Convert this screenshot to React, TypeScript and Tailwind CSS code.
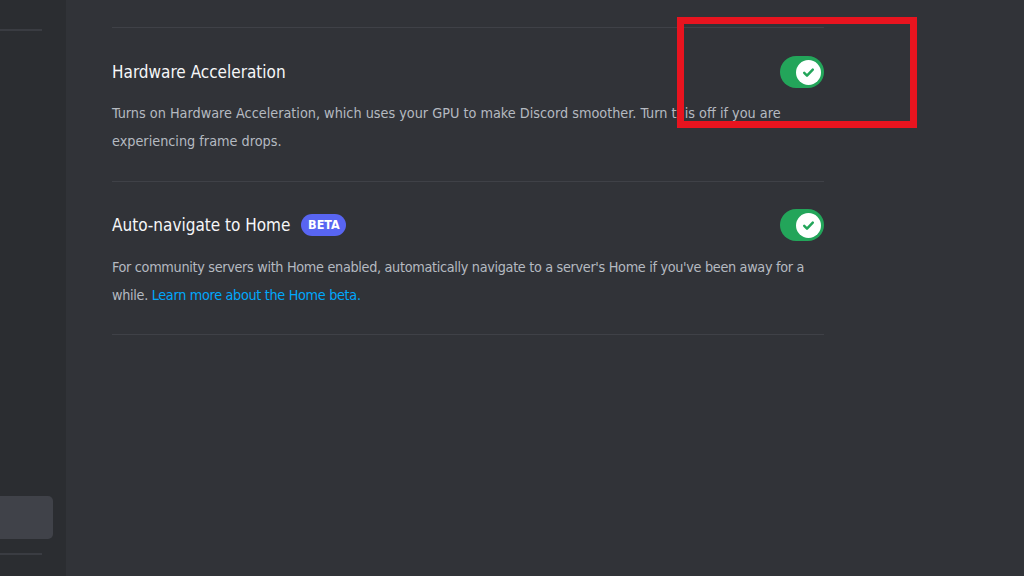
import React from "react";

const font = { fontFamily: '"DejaVu Sans Condensed", "Liberation Sans", sans-serif' };

function Toggle() {
  return (
    <div className="flex h-[32px] w-[44px] items-center justify-end rounded-full bg-[#23a55a] pr-[3px]">
      <div className="flex h-[25px] w-[25px] items-center justify-center rounded-full bg-white">
        <svg width="15" height="15" viewBox="0 0 14 14" fill="none">
          <path d="M3 7.4l2.6 2.6L11 4.3" stroke="#23a55a" strokeWidth="2.3" strokeLinecap="round" strokeLinejoin="round" />
        </svg>
      </div>
    </div>
  );
}

export default function App() {
  return (
    <div className="relative flex h-[576px] w-[1024px] overflow-hidden bg-[#313338]" style={font}>
      {/* settings sidebar */}
      <aside className="flex w-[66px] shrink-0 flex-col bg-[#2b2d31]">
        <div className="mt-[29px] h-[2px] w-[42px] bg-[#3a3c42]" />
        <div className="mt-[465px] h-[43px] w-[53px] rounded-r-[5px] bg-[#404249]" />
        <div className="mt-[14px] h-[2px] w-[42px] bg-[#3a3c42]" />
      </aside>

      {/* settings content */}
      <main className="flex-1 pl-[46px]">
        <div className="w-[712px]">
          <div className="mt-[27px] h-px bg-[#3f4147]" />

          <div className="mt-[28px] flex h-[32px] items-center justify-between">
            <span className="text-[17px] font-medium leading-[24px] text-[#f6f7f8]">Hardware Acceleration</span>
            <Toggle />
          </div>
          <p className="mt-[11px] pr-[40px] text-[14.3px] leading-[28px] text-[#b5bac1]">
            Turns on Hardware Acceleration, which uses your GPU to make Discord smoother. Turn this off if you are experiencing frame drops.
          </p>
          <div className="mt-[26px] h-px bg-[#3f4147]" />

          <div className="mt-[27px] flex h-[32px] items-center justify-between">
            <div className="flex items-center gap-[11px]">
              <span className="text-[17px] font-medium leading-[24px] text-[#f6f7f8]">Auto-navigate to Home</span>
              <span className="flex h-[22px] w-[45px] items-center justify-center rounded-full bg-[#5865f2] text-[12.5px] font-bold text-white">BETA</span>
            </div>
            <Toggle />
          </div>
          <p className="mt-[12px] text-[14.3px] leading-[28px] tracking-[-0.32px] text-[#b5bac1]">
            For community servers with Home enabled, automatically navigate to a server's Home if you've been away for a while.{" "}
            <a className="text-[#00a8fc]">Learn more about the Home beta.</a>
          </p>
          <div className="mt-[25px] h-px bg-[#3f4147]" />
        </div>
      </main>

      {/* highlight frame around the toggle */}
      <div className="absolute left-[677px] top-[17px] h-[111px] w-[240px] border-[7px] border-[#e8141f]" />
    </div>
  );
}
